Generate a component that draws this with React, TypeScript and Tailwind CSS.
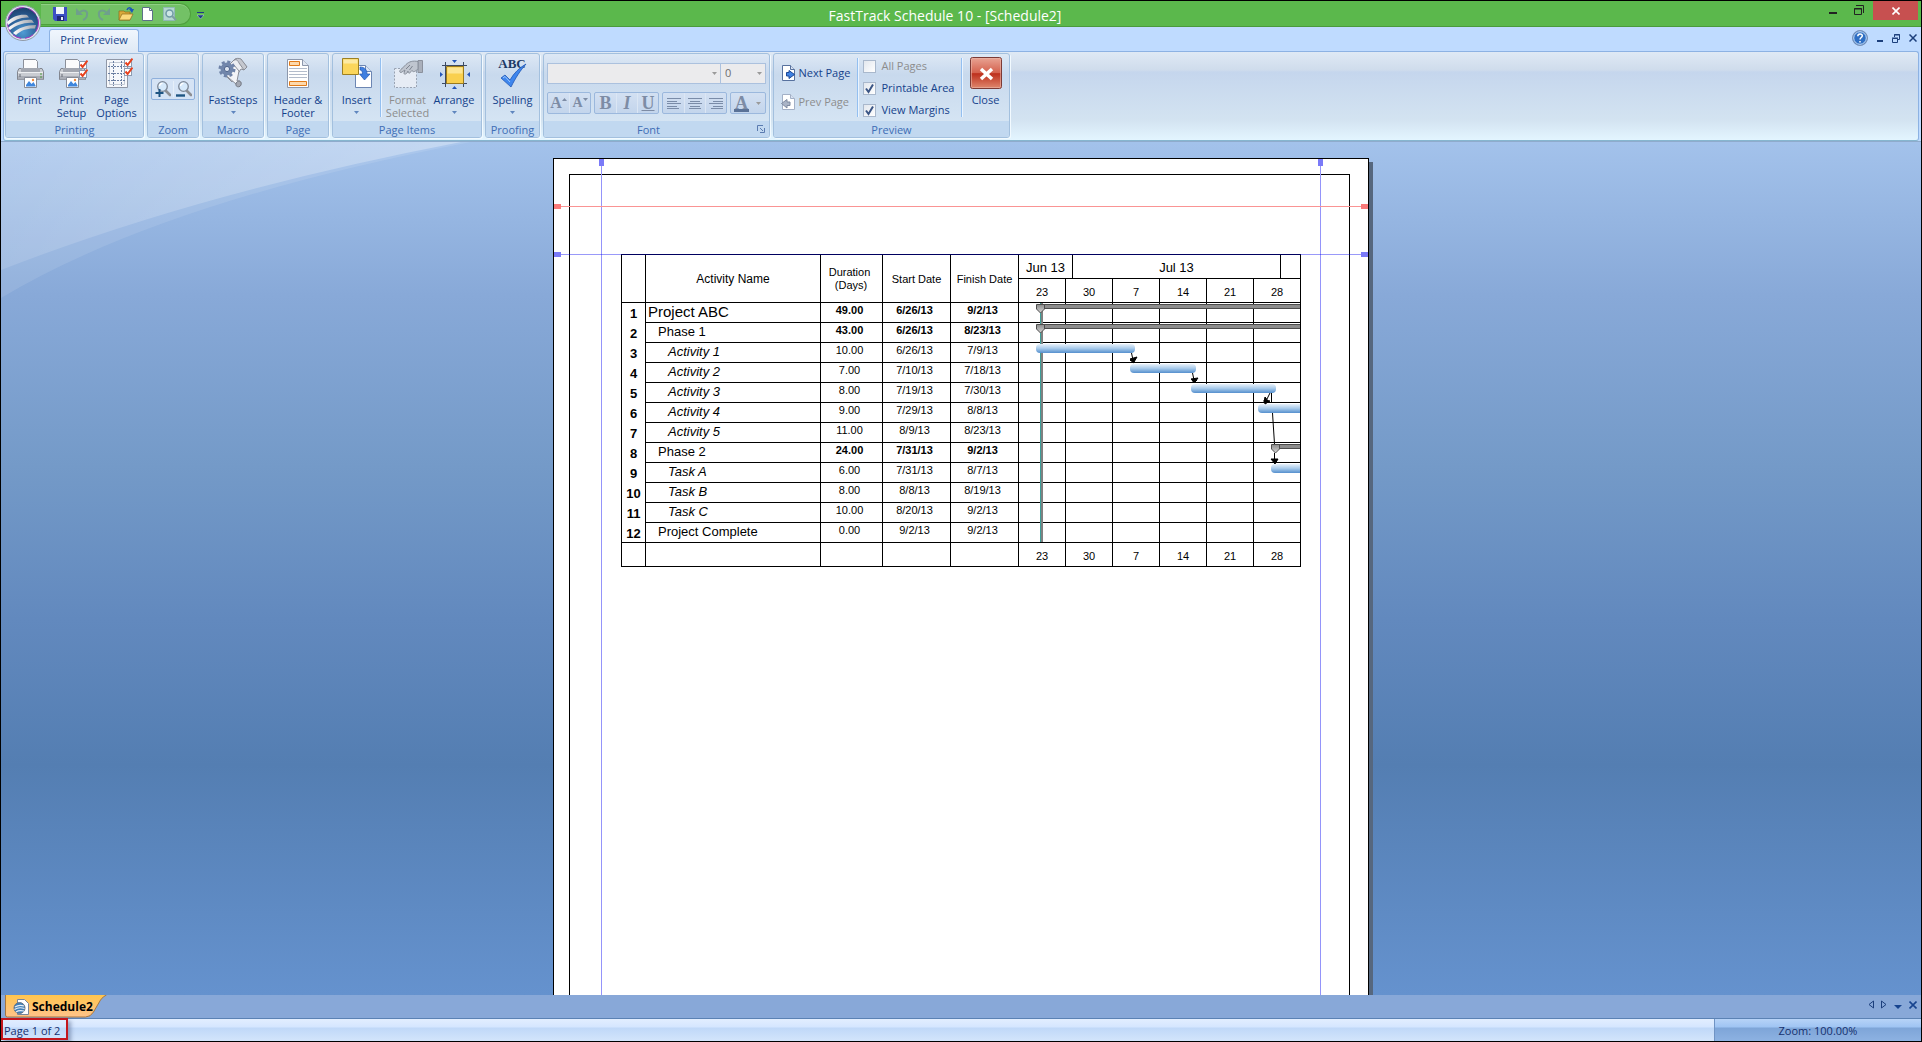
import type { ReactNode } from "react";
import { clsx } from "clsx";

const rows = [
  { name: "Project ABC", days: "49.00", start: "6/26/13", finish: "9/2/13", level: 0 },
  { name: "Phase 1", days: "43.00", start: "6/26/13", finish: "8/23/13", level: 1, bold: true },
  { name: "Activity 1", days: "10.00", start: "6/26/13", finish: "7/9/13", level: 2 },
  { name: "Activity 2", days: "7.00", start: "7/10/13", finish: "7/18/13", level: 2 },
  { name: "Activity 3", days: "8.00", start: "7/19/13", finish: "7/30/13", level: 2 },
  { name: "Activity 4", days: "9.00", start: "7/29/13", finish: "8/8/13", level: 2 },
  { name: "Activity 5", days: "11.00", start: "8/9/13", finish: "8/23/13", level: 2 },
  { name: "Phase 2", days: "24.00", start: "7/31/13", finish: "9/2/13", level: 1, bold: true },
  { name: "Task A", days: "6.00", start: "7/31/13", finish: "8/7/13", level: 2 },
  { name: "Task B", days: "8.00", start: "8/8/13", finish: "8/19/13", level: 2 },
  { name: "Task C", days: "10.00", start: "8/20/13", finish: "9/2/13", level: 2 },
  { name: "Project Complete", days: "0.00", start: "9/2/13", finish: "9/2/13", level: 1 },
];

const weeks = ["23", "30", "7", "14", "21", "28"];

/* ---------- icons ---------- */

function RedCheck({ x, y }: { x: number; y: number }) {
  return (
    <g transform={`translate(${x} ${y})`}>
      <rect x=".5" y=".5" width="7" height="7" fill="#fff" stroke="#8d9bb0" />
      <path d="M1.5 3.5 3.6 6 8.5-.5" fill="none" stroke="#e8401c" strokeWidth="2" />
    </g>
  );
}

function Printer() {
  return (
    <g>
      <path d="M9.500 2.500h12l2 2v9h-14z" fill="#fbfbfc" stroke="#8b8f99" />
      <path d="M5 11.500h23l1.500 3v8h-26v-8z" fill="#c9ccd2" stroke="#82868f" />
      <path d="M7 11h19v4H7z" fill="#a3a7b0" />
      <path d="M4 15.500h25" stroke="#eceef1" />
      <path d="M4 19h25v3.500H4z" fill="#a9adb6" />
      <path d="M26 17h2M26 20h2" stroke="#4c9a3c" />
      <path d="M6 17v3" stroke="#676b74" />
      <path d="M10.500 20.500h12v10h-12z" fill="#fff" stroke="#868b96" />
      <path d="M12 28l3-4 2.500 3 2-2 2 3.500v1H12z" fill="#3f86dc" />
      <circle cx="19" cy="23" r="1.200" fill="#f08a3c" />
    </g>
  );
}

function PrintIcon() {
  return (
    <svg className="size-8" viewBox="0 0 32 32">
      <Printer />
    </svg>
  );
}

function PrintSetupIcon() {
  return (
    <svg className="size-8" viewBox="0 0 32 32">
      <Printer />
      <RedCheck x={23} y={4} />
      <RedCheck x={23} y={13} />
    </svg>
  );
}

function PageOptionsIcon() {
  return (
    <svg className="size-8" viewBox="0 0 32 32">
      <path d="M5.500 2.500h21v28h-21z" fill="#f6f8fb" stroke="#8f97a6" />
      <path d="M8.500 5.500h15v22h-15z" fill="none" stroke="#c2c9d4" />
      <path d="M12.500 4v25M20.500 4v25M7 9.500h18M7 23.500h18M7 16.500h18" stroke="#6a7ea1" strokeDasharray="2 1" />
      <RedCheck x={23} y={2} />
      <RedCheck x={23} y={11} />
    </svg>
  );
}

function MagnifierIcon({ plus }: { plus?: boolean }) {
  return (
    <svg className="size-4" viewBox="0 0 16 16">
      <path d="M10.500 9.500 15 14" stroke="#8d8f94" strokeWidth="2.600" strokeLinecap="round" />
      <circle cx="7.500" cy="5.500" r="4.800" fill="#d6e9fb" stroke="#7e8897" strokeWidth="1.300" />
      <path d="M4.500 5a3 3 0 0 1 3-2.600" fill="none" stroke="#fff" strokeWidth="1.300" />
      {plus ? (
        <path d="M4.500 8v8M.5 12h8" stroke="#1f5583" strokeWidth="2" />
      ) : (
        <path d="M0 14.500h9" stroke="#1f5583" strokeWidth="2.400" />
      )}
    </svg>
  );
}

function FastStepsIcon() {
  return (
    <svg className="size-8" viewBox="0 0 32 32">
      <path d="M17 3c2-2 5-2 7 0l6 7-3 3-3-1-9 13-10-10z" fill="#eceef2" stroke="#8a8e98" />
      <path d="M17 3c3-1 4 1 5 3l5 7 3-3-6-8c-2-1-5-1-7 1z" fill="#c5c8cf" stroke="#8a8e98" />
      <path d="M5 15l14 12c2 2 5 2 5-1 0-2-2-3-4-2l2-10-5-6z" fill="#f3f4f7" stroke="#8a8e98" />
      <path d="M19 27c-1 3 4 4 5 1 1-4-3-5-5-2z" fill="#a5a9b3" stroke="#757a85" />
      <circle cx="10" cy="12" r="7" fill="none" stroke="#6f83a8" strokeWidth="3" strokeDasharray="3 2.500" />
      <circle cx="10" cy="12" r="6.500" fill="#7186ab" />
      <circle cx="10" cy="12" r="2.600" fill="#dbe3f0" stroke="#50658c" />
    </svg>
  );
}

function HeaderFooterIcon() {
  return (
    <svg className="size-8" viewBox="0 0 32 32">
      <path d="M5.500 2.500h15l6 6v22h-21z" fill="#fff" stroke="#8c97ab" />
      <path d="M20.500 2.500v6h6" fill="#dfe6f1" stroke="#8c97ab" />
      <path d="M7.500 4.500h10v4h-10z" fill="#fdd9ad" stroke="#e07b1a" />
      <path d="M7 11.500h18M7 14.500h18M7 17.500h18M7 20.500h18" stroke="#b3bccb" />
      <path d="M7.500 24.500h17v4h-17z" fill="#fdd9ad" stroke="#e07b1a" />
    </svg>
  );
}

function InsertIcon() {
  return (
    <svg className="size-8" viewBox="0 0 32 32">
      <path d="M14.500 8.500h10l6 6v16h-16z" fill="#fff" stroke="#6c86b3" />
      <path d="M24.500 8.500v6h6" fill="#dbe5f4" stroke="#6c86b3" />
      <path d="M1.500 1.500h16v16h-16z" fill="#fbd65c" stroke="#9d8023" />
      <path d="M2.500 2.500h14v4h-14z" fill="#fdeaa2" />
      <path d="M19 10c5 0 7 3 7 7h3l-5.500 6-5-6h3c0-3-1-4-2.500-4z" fill="#3f7fe0" stroke="#1f56b0" strokeWidth=".7" />
    </svg>
  );
}

function FormatIcon() {
  return (
    <svg className="size-8" viewBox="0 0 32 32">
      <path d="M2.500 11.500h22v19h-22z" fill="#e6ecf5" stroke="#99a3b3" strokeDasharray="2 1.500" />
      <path d="M26 3.500h4.500v12H26z" fill="#aab0bb" stroke="#8b919d" />
      <path d="M26 4.500c-5-1-9 0-12 3l-6 6c-1 2 1 2.500 2 1.500l3-2-1 3c0 2 2 1 3 0l1-2c0 3 2 2.500 3 .5l1-1c1 2 3 1 4 0l2-1z" fill="#bfc5cf" stroke="#878e9a" />
      <path d="M14 12l4-4M17.500 13l3-4" stroke="#7d8490" />
    </svg>
  );
}

function ArrangeIcon() {
  return (
    <svg className="size-8" viewBox="0 0 32 32">
      <path d="M7.500 5v25M25.500 5v25M4 8.500h25M4 26.500h25" stroke="#3c4a63" />
      <path d="M8.500 9.500h17v17h-17z" fill="#f9d04f" stroke="#9a7a1e" />
      <path d="M9.500 10.500h15v6h-15z" fill="#fde694" />
      <path d="M14 3h5l-2.500 3zM14 32h5l-2.500-3zM2 15v5l3-2.500zM32 15v5l-3-2.500z" fill="#2456b8" />
    </svg>
  );
}

function SpellingIcon() {
  return (
    <svg className="size-8 overflow-visible" viewBox="0 0 32 32">
      <text x="15" y="11" textAnchor="middle" className="fill-[#1d3a66] font-['Liberation_Serif',serif] text-[13px] font-bold">
        ABC
      </text>
      <path d="M4 21l4-3 5 5C17 16 22 11 29 7c-6 7-10 13-15 23z" fill="#3e86ee" stroke="#1f57b5" strokeWidth=".8" />
      <path d="M6 21l2-1.500 5 5.500" fill="none" stroke="#9cc6fb" />
    </svg>
  );
}

function PageArrowIcon({ back }: { back?: boolean }) {
  return (
    <svg className="size-4 shrink-0" viewBox="0 0 16 16">
      <path d="M1.500.5h8l4 4v11h-12z" fill="#fff" stroke={back ? "#a3b0c6" : "#57719e"} />
      <path d="M9.500.5v4h4" fill="#d8e2f1" stroke={back ? "#a3b0c6" : "#57719e"} />
      {back ? (
        <path d="M9 8H6V5.500L.5 9.500 6 14v-2.500h3z" fill="#aab4c6" stroke="#7f8aa0" />
      ) : (
        <path d="M5.500 7.500H8V5.500l5.500 4-5.500 4v-2.500H5.500z" fill="#3f82e4" stroke="#1c4694" />
      )}
    </svg>
  );
}

function AlignIcon({ kind }: { kind: "left" | "center" | "right" }) {
  const d = {
    left: "M1 3.500h14M1 6.500h10M1 8.500h14M1 11.500h10M1 13.500h12",
    center: "M1 3.500h14M3 6.500h10M1 8.500h14M3 11.500h10M2 13.500h12",
    right: "M1 3.500h14M5 6.500h10M1 8.500h14M5 11.500h10M3 13.500h12",
  }[kind];
  return (
    <svg className="size-4" viewBox="0 0 16 16">
      <path d={d} stroke="#7a8ca8" />
    </svg>
  );
}

function AppOrb() {
  return (
    <svg className="absolute left-[3px] top-[3px] z-20 size-[38px]" viewBox="0 0 38 38">
      <defs>
        <radialGradient id="orb" cx=".5" cy=".8" r=".8">
          <stop offset="0" stopColor="#4f9bd4" />
          <stop offset=".6" stopColor="#2a5f96" />
          <stop offset="1" stopColor="#1d3f6b" />
        </radialGradient>
        <linearGradient id="orbStripe" x1="0" x2="1">
          <stop offset="0" stopColor="#fff" />
          <stop offset="1" stopColor="#9fa4ad" />
        </linearGradient>
      </defs>
      <circle cx="19" cy="19" r="17.500" fill="#dfe5ee" stroke="#8f99a8" />
      <circle cx="19" cy="19" r="15.500" fill="url(#orb)" stroke="#b032c0" strokeDasharray="9 4" />
      <path d="M3 18C9 12 16 10 23 11l2 2.500C17 13 10 16 4 21z" fill="url(#orbStripe)" />
      <path d="M4 24C11 18 20 15 28 16l2 3C21 18 12 21 6 26z" fill="url(#orbStripe)" />
      <path d="M9 29C14 24 22 21 32 21l-1 3.500C24 24 17 26 12 31z" fill="url(#orbStripe)" />
    </svg>
  );
}

/* ---------- ribbon ---------- */

function Group({ label, className, corner, children }: { label: string; className: string; corner?: boolean; children: ReactNode }) {
  return (
    <section
      aria-label={label}
      className={clsx(
        "flex h-[85px] shrink-0 flex-col rounded-[3px] border border-[#a3c0de] bg-linear-to-b from-[#dde8f5] from-0% via-[#c8d9ed] via-25% to-[#d9e8f5] shadow-[1px_1px_0_#f2faff]",
        className,
      )}
    >
      <div className="flex flex-1 justify-center">{children}</div>
      <div className={clsx("relative h-4 rounded-b-[2px] bg-[#c1d8f0] text-center leading-[18px] text-[#3e6db5]", corner && "pr-4")}>
        {label}
        {corner && (
          <button aria-label="Font dialog" className="absolute right-1 top-1">
            <svg className="block size-2" viewBox="0 0 8 8">
              <path d="M.5 6V.5H6" fill="none" stroke="#5a7bb0" />
              <path d="M3 7.500h4.500V3M3 3l3 3" fill="none" stroke="#5a7bb0" />
            </svg>
          </button>
        )}
      </div>
    </section>
  );
}

function BigButton({ icon, lines, menu, disabled, className }: { icon: ReactNode; lines: string[]; menu?: boolean; disabled?: boolean; className: string }) {
  return (
    <button disabled={disabled} className={clsx("flex flex-col items-center pt-[3px] leading-[13px] disabled:text-[#8d8d8d]", className)}>
      {icon}
      <span className="mt-1 whitespace-nowrap">
        {lines.map((l) => (
          <span key={l} className="block">
            {l}
          </span>
        ))}
      </span>
      {menu && (
        <svg className="mt-[5px] h-[3px] w-[5px]" viewBox="0 0 5 3">
          <path d="M0 0h5L2.500 3z" fill="#5f86be" />
        </svg>
      )}
    </button>
  );
}

function Divider() {
  return <div className="my-1 w-[2px] shrink-0 border-l border-[#93bff0] bg-[#eaf4ff]" />;
}

function ToolSet({ children }: { children: ReactNode }) {
  return <div className="flex h-[22px] items-center rounded-[2px] border border-[#9bb8dd] bg-linear-to-b from-[#d3e0f2] to-[#c3d5ec]">{children}</div>;
}

function Tool({ label, children }: { label: string; children: ReactNode }) {
  return (
    <button disabled aria-label={label} className="flex h-5 w-[21px] items-center justify-center border-l border-[#dbe6f4] font-['Liberation_Serif',serif] text-lg leading-5 text-[#7d8ca5] first:border-l-0">
      {children}
    </button>
  );
}

function Check({ label, checked, disabled }: { label: string; checked?: boolean; disabled?: boolean }) {
  return (
    <label className={clsx("flex h-[22px] items-center gap-1.5 whitespace-nowrap", disabled && "text-[#8d8d8d]")}>
      <span className="relative size-[13px]">
        <input type="checkbox" defaultChecked={checked} disabled={disabled} className="peer block size-[13px] appearance-none border border-[#a9b8cc] bg-linear-to-br from-[#e2e7ee] to-white" />
        <svg className="pointer-events-none absolute inset-0 hidden size-[13px] peer-checked:block" viewBox="0 0 13 13">
          <path d="M3 6.500 5.500 10 10 2.500" fill="none" stroke="#3a5585" strokeWidth="2" />
        </svg>
      </span>
      {label}
    </label>
  );
}

function Ribbon() {
  return (
    <div className="mx-[2px] flex h-[90px] shrink-0 gap-[3px] rounded-[3px] border border-[#8db2e3] border-b-[#86b6cf] bg-[linear-gradient(#dfe9f5,#cfdcec_18px,#c5d6ed_20px,#d3e3f1_68px,#e3f5ff)] px-px pt-px text-[#15428b]">
      <Group label="Printing" className="w-[139px]">
        <BigButton icon={<PrintIcon />} lines={["Print"]} className="w-[42px]" />
        <BigButton icon={<PrintSetupIcon />} lines={["Print", "Setup"]} className="w-[42px]" />
        <BigButton icon={<PageOptionsIcon />} lines={["Page", "Options"]} className="w-[48px]" />
      </Group>
      <Group label="Zoom" className="w-[52px]">
        <div className="mt-6 flex h-[22px] items-center rounded-[2px] border border-[#8fb0dc] bg-[#d5e3f5]">
          <button aria-label="Zoom in" className="flex w-[21px] justify-center">
            <MagnifierIcon plus />
          </button>
          <button aria-label="Zoom out" className="flex w-[21px] justify-center border-l border-[#e6eff9]">
            <MagnifierIcon />
          </button>
        </div>
      </Group>
      <Group label="Macro" className="w-[62px]">
        <BigButton icon={<FastStepsIcon />} lines={["FastSteps"]} menu className="w-[58px]" />
      </Group>
      <Group label="Page" className="w-[62px]">
        <BigButton icon={<HeaderFooterIcon />} lines={["Header &", "Footer"]} className="w-[58px]" />
      </Group>
      <Group label="Page Items" className="w-[150px]">
        <BigButton icon={<InsertIcon />} lines={["Insert"]} menu className="w-[46px]" />
        <Divider />
        <BigButton icon={<FormatIcon />} lines={["Format", "Selected"]} disabled className="w-[52px]" />
        <BigButton icon={<ArrangeIcon />} lines={["Arrange"]} menu className="mr-1.5 w-[41px]" />
      </Group>
      <Group label="Proofing" className="w-[55px]">
        <BigButton icon={<SpellingIcon />} lines={["Spelling"]} menu className="w-[50px]" />
      </Group>
      <Group label="Font" className="w-[227px]" corner>
        <div className="flex w-[219px] flex-col gap-2 pt-[9px]">
          <div className="flex">
            <div className="relative w-[174px]">
              <select disabled aria-label="Font name" className="block h-[21px] w-full appearance-none border border-[#abc1de] bg-[#ebebed]" />
              <svg className="absolute right-1 top-[9px] h-[3px] w-[5px]" viewBox="0 0 5 3">
                <path d="M0 0h5L2.500 3z" fill="#9a9a9a" />
              </svg>
            </div>
            <div className="relative flex-1">
              <select disabled aria-label="Font size" className="block h-[21px] w-full appearance-none border border-l-0 border-[#abc1de] bg-[#ebebed] pl-1 text-[#6d6d6d] opacity-100">
                <option>0</option>
              </select>
              <svg className="absolute right-1 top-[9px] h-[3px] w-[5px]" viewBox="0 0 5 3">
                <path d="M0 0h5L2.500 3z" fill="#9a9a9a" />
              </svg>
            </div>
          </div>
          <div className="flex justify-between">
            <ToolSet>
              <Tool label="Grow font">
                <b className="text-base">A</b>
                <svg className="mb-2 h-[3px] w-[5px]" viewBox="0 0 5 3">
                  <path d="M0 3h5L2.500 0z" fill="#7d8ca5" />
                </svg>
              </Tool>
              <Tool label="Shrink font">
                <b className="text-sm">A</b>
                <svg className="mb-2 h-[3px] w-[5px]" viewBox="0 0 5 3">
                  <path d="M0 0h5L2.500 3z" fill="#7d8ca5" />
                </svg>
              </Tool>
            </ToolSet>
            <ToolSet>
              <Tool label="Bold">
                <b>B</b>
              </Tool>
              <Tool label="Italic">
                <i className="font-bold">I</i>
              </Tool>
              <Tool label="Underline">
                <b className="underline">U</b>
              </Tool>
            </ToolSet>
            <ToolSet>
              <Tool label="Align left">
                <AlignIcon kind="left" />
              </Tool>
              <Tool label="Center">
                <AlignIcon kind="center" />
              </Tool>
              <Tool label="Align right">
                <AlignIcon kind="right" />
              </Tool>
            </ToolSet>
            <ToolSet>
              <Tool label="Font color">
                <b className="h-[17px] border-b-3 border-[#5a7297] px-px leading-4">A</b>
              </Tool>
              <svg className="mx-1 h-[3px] w-[5px]" viewBox="0 0 5 3">
                <path d="M0 0h5L2.500 3z" fill="#9a9a9a" />
              </svg>
            </ToolSet>
          </div>
        </div>
      </Group>
      <Group label="Preview" className="w-[237px]">
        <div className="flex w-[82px] flex-col gap-[13px] pt-[11px]">
          <button className="flex h-4 items-center gap-0.5 whitespace-nowrap pl-[6px]">
            <PageArrowIcon />
            Next Page
          </button>
          <button disabled className="flex h-4 items-center gap-0.5 whitespace-nowrap pl-[6px] text-[#8d8d8d]">
            <PageArrowIcon back />
            Prev Page
          </button>
        </div>
        <Divider />
        <div className="w-[102px] pl-1 pt-px">
          <Check label="All Pages" disabled />
          <Check label="Printable Area" checked />
          <Check label="View Margins" checked />
        </div>
        <Divider />
        <BigButton
          className="w-[46px]"
          lines={["Close"]}
          icon={
            <svg className="size-8" viewBox="0 0 32 32">
              <defs>
                <linearGradient id="closeRed" x2="0" y2="1">
                  <stop offset="0" stopColor="#e9a595" />
                  <stop offset=".5" stopColor="#d4604c" />
                  <stop offset=".52" stopColor="#bd2f1c" />
                  <stop offset="1" stopColor="#e08a70" />
                </linearGradient>
              </defs>
              <rect x=".5" y=".5" width="31" height="31" rx="2" fill="url(#closeRed)" stroke="#7c3a35" />
              <rect x="1.500" y="1.500" width="29" height="29" rx="1" fill="none" stroke="#eab5a8" strokeOpacity=".6" />
              <path d="M11 12l11 10M22 12l-11 10" stroke="#fff" strokeWidth="3.500" />
            </svg>
          }
        />
      </Group>
    </div>
  );
}

/* ---------- title bar ---------- */

function QuickAccess() {
  return (
    <div className="ml-[40px] mt-[2px] flex h-[22px] w-[150px] items-center gap-[6px] rounded-r-full border border-l-0 border-[#4f9f3e] bg-[#73c166] pl-[11px] shadow-[inset_0_1px_0_#8fd084]">
      <button aria-label="Save">
        <svg className="size-4" viewBox="0 0 16 16">
          <path d="M1 1h14v14H3l-2-2z" fill="#3c4fc4" />
          <path d="M4 1h8v7H4z" fill="#f1f4fb" />
          <path d="M5 10h7v5H5z" fill="#20297a" />
          <path d="M9 11h2v3H9z" fill="#e8ecf8" />
        </svg>
      </button>
      <button aria-label="Undo" disabled>
        <svg className="size-4" viewBox="0 0 16 16">
          <path d="M6 6c4-3 8-1 7 3 0 2-2 4-4 5" fill="none" stroke="#6f9f8c" strokeWidth="2" />
          <path d="M2 2v7h7z" fill="#6f9f8c" />
        </svg>
      </button>
      <button aria-label="Redo" disabled>
        <svg className="size-4" viewBox="0 0 16 16">
          <path d="M10 6C6 3 2 5 3 9c0 2 2 4 4 5" fill="none" stroke="#6f9f8c" strokeWidth="2" />
          <path d="M14 2v7H7z" fill="#6f9f8c" />
        </svg>
      </button>
      <button aria-label="Open">
        <svg className="size-4" viewBox="0 0 16 16">
          <path d="M1 5h5l1 1h5v8H1z" fill="#d9a93a" stroke="#8f6a1a" strokeWidth=".7" />
          <path d="M1 14 4 8h11l-3 6z" fill="#fbd97c" stroke="#8f6a1a" strokeWidth=".7" />
          <path d="M9 4c1-3 4-3 5 0" fill="none" stroke="#1d56b8" strokeWidth="1.500" />
          <path d="M11 3h5l-2 4z" fill="#1d56b8" />
        </svg>
      </button>
      <button aria-label="New">
        <svg className="size-4" viewBox="0 0 16 16">
          <path d="M2.500 1.500h7l3 3v10h-10z" fill="#fff" stroke="#5c7188" />
          <path d="M9.500 1.500v3h3" fill="none" stroke="#5c7188" />
        </svg>
      </button>
      <button aria-label="Print preview" disabled>
        <svg className="size-4" viewBox="0 0 16 16">
          <path d="M1.500 1.500h11v13h-11z" fill="#b4d6cf" stroke="#8fb8b4" />
          <circle cx="7.500" cy="7.500" r="3.500" fill="#cde6e4" stroke="#6f9aa6" strokeWidth="1.500" />
          <path d="M10 10l4 4" stroke="#7d9ea0" strokeWidth="2" />
        </svg>
      </button>
    </div>
  );
}

function TitleBar() {
  return (
    <header className="grid h-[26px] shrink-0 grid-cols-[1fr_auto_1fr] border-b border-[#4a9a3c] bg-[#5bb84c]">
      <div className="flex">
        <QuickAccess />
        <button aria-label="Customize toolbar" className="ml-[6px]">
          <svg className="h-2 w-[7px]" viewBox="0 0 7 8">
            <path d="M0 .5h7" stroke="#1c3a86" />
            <path d="M0 3h7L3.500 7z" fill="#1c3a86" stroke="#e8f4ff" strokeWidth=".4" />
          </svg>
        </button>
      </div>
      <h1 className="pr-8 text-sm leading-[29px] text-white">FastTrack Schedule 10 - [Schedule2]</h1>
      <div className="flex items-start justify-end pr-[3px]">
        <button aria-label="Minimize" className="px-2 pt-[11px]">
          <span className="block h-[2px] w-2 bg-[#222]" />
        </button>
        <button aria-label="Restore" className="px-[9px] pt-1">
          <svg className="block size-[10px]" viewBox="0 0 10 10">
            <path d="M.5 3.500h7v6h-7zM0 4h8M2 .5h7.500V8" fill="none" stroke="#222" />
          </svg>
        </button>
        <button aria-label="Close" className="flex h-[19px] w-[45px] items-center justify-center bg-[#c75050]">
          <svg className="size-2" viewBox="0 0 8 8">
            <path d="M.5 .5l7 7M7.500 .5l-7 7" stroke="#fff" strokeWidth="1.600" />
          </svg>
        </button>
      </div>
    </header>
  );
}

function TabRow() {
  return (
    <div className="flex h-6 shrink-0 items-end justify-between bg-[#bfdbff] text-[#15428b]">
      <button className="relative z-10 -mb-px ml-[48px] h-[23px] w-[90px] rounded-t-[3px] border border-b-0 border-[#8db2e3] bg-linear-to-b from-[#f0f6fd] to-[#dfe9f5] pb-0.5">
        Print Preview
      </button>
      <div className="flex h-6 items-center gap-[9px] pb-0.5 pr-1 text-[#1c3f7c]">
        <button aria-label="Help">
          <svg className="size-4" viewBox="0 0 16 16">
            <circle cx="8" cy="8" r="7.500" fill="#2f6fc4" stroke="#7d93b5" />
            <circle cx="8" cy="8" r="6.300" fill="none" stroke="#cfe2f8" />
            <path d="M5.800 6.200c0-3 4.500-3 4.500-.4C10.300 7.500 8 7.500 8 9.500M8 11v1.500" fill="none" stroke="#fff" strokeWidth="1.500" />
          </svg>
        </button>
        <button aria-label="Minimize document">
          <span className="mt-1.5 block h-[2px] w-1.5 bg-[#1c3f7c]" />
        </button>
        <button aria-label="Restore document">
          <svg className="h-[9px] w-2" viewBox="0 0 8 9">
            <path d="M.5 4.500h5v4h-5zM0 4h6M2.500 3V.5h5v5H6M2 1h6" fill="none" stroke="#1c3f7c" />
          </svg>
        </button>
        <button aria-label="Close document">
          <svg className="size-2" viewBox="0 0 8 8">
            <path d="M.5 .5l7 7M7.500 .5l-7 7" stroke="#1c3f7c" strokeWidth="1.500" />
          </svg>
        </button>
      </div>
    </div>
  );
}

/* ---------- page ---------- */

function Summary({ x, y }: { x: number; y: number }) {
  return (
    <g transform={`translate(${x} ${y})`}>
      <rect x="8" y="0" width={274 - x} height="5" fill="#8c8c8c" />
      <path d={`M8 .5h${274 - x}M8 4.500h${274 - x}`} stroke="#4d4d4d" />
      <path d="M.5.5h8V5L4.500 9 .5 5z" fill="url(#cap)" stroke="#4d4d4d" />
    </g>
  );
}

function Gantt() {
  return (
    <svg className="absolute right-0 top-[49px] h-[240px] w-[283px]" viewBox="0 0 283 240">
      <defs>
        <linearGradient id="bar" x2="0" y2="1">
          <stop offset="0" stopColor="#e9f2fb" />
          <stop offset=".5" stopColor="#a6c9ea" />
          <stop offset="1" stopColor="#558fcd" />
        </linearGradient>
        <linearGradient id="cap" x2="0" y2="1">
          <stop offset="0" stopColor="#8a8a8a" />
          <stop offset="1" stopColor="#d5d5d5" />
        </linearGradient>
        <clipPath id="chartEdge">
          <rect width="282" height="240" />
        </clipPath>
      </defs>
      <path d="M22.500 0v239" stroke="#3d9d98" />
      <path d="M24 0v239" stroke="#808080" strokeWidth="2" />
      <Summary x={18} y={1} />
      <Summary x={18} y={21} />
      <g clipPath="url(#chartEdge)" fill="url(#bar)">
        <rect x="18" y="41" width="99" height="9" rx="4" />
        <rect x="112" y="61" width="66" height="9" rx="4" />
        <rect x="173" y="81" width="85" height="9" rx="4" />
        <rect x="240" y="101" width="60" height="9" rx="4" />
        <rect x="253" y="161" width="60" height="9" rx="4" />
      </g>
      <path d="M113.500 50 115 57M174.500 70 176 77M252 90l-3 6M253.500 90v10M254.500 110l2 31M256.500 150v7" stroke="#000" fill="none" />
      <Summary x={253} y={141} />
      <path
        d="M112 56l7-2-3 5zM112 57h4v3zM173 76l7-1-3 4zM174 77h5l-3 3zM247 94l4 5h-5zM246 97l6 1-5 3zM253 156h7l-3 5z"
        stroke="#000"
      />
    </svg>
  );
}

function ScheduleTable() {
  const cell = "border-l border-t border-black p-0 font-normal";
  const value = "border-l border-t border-black pr-1";
  return (
    <div className="relative w-[680px]">
      <table className="w-full table-fixed border-separate border-spacing-0 border-b border-r border-black text-center text-[11px] leading-[14px]">
        <colgroup>
          <col className="w-[24px]" />
          <col className="w-[175px]" />
          <col className="w-[62px]" />
          <col className="w-[68px]" />
          <col className="w-[68px]" />
          {weeks.map((w) => (
            <col key={w} className="w-[47px]" />
          ))}
        </colgroup>
        <thead>
          <tr className="h-6">
            <th rowSpan={2} className={cell} />
            <th rowSpan={2} className={clsx(cell, "text-xs")}>
              Activity Name
            </th>
            <th rowSpan={2} className="border-l border-t border-black pr-1 font-normal leading-[13px]">
              Duration
              <br />
              &nbsp;(Days)
            </th>
            <th rowSpan={2} className={cell}>
              Start Date
            </th>
            <th rowSpan={2} className={cell}>
              Finish Date
            </th>
            <th colSpan={6} className={cell}>
              <div className="flex h-[23px] text-[13px] leading-[25px]">
                <span className="w-[53px]">Jun 13</span>
                <span className="w-[208px] border-l border-black">Jul 13</span>
                <span className="flex-1 border-l border-black" />
              </div>
            </th>
          </tr>
          <tr className="h-6">
            {weeks.map((w) => (
              <th key={w} className={clsx(cell, "pt-0.5")}>
                {w}
              </th>
            ))}
          </tr>
        </thead>
        <tbody className="align-top">
          {rows.map((r, i) => {
            const heavy = r.level === 0 || r.bold;
            return (
              <tr key={r.name} className="h-5">
                <th className={clsx("border-l border-black text-[13px] leading-[17px]", i === 0 ? "border-t pt-[2px]" : "pt-[3px]")}>{i + 1}</th>
                <td
                  className={clsx(
                    "border-l border-t border-black text-left leading-[17px]",
                    r.level === 0 && "pl-0.5 text-[15px]",
                    r.level === 1 && "pl-3 text-[13px]",
                    r.level === 2 && "pl-[22px] text-[13px] italic",
                  )}
                >
                  {r.name}
                </td>
                <td className={clsx(value, heavy && "font-bold")}>{r.days}</td>
                <td className={clsx(value, heavy && "font-bold")}>{r.start}</td>
                <td className={clsx(value, heavy && "font-bold")}>{r.finish}</td>
                {weeks.map((w) => (
                  <td key={w} className="border-l border-t border-black" />
                ))}
              </tr>
            );
          })}
        </tbody>
        <tfoot>
          <tr className="h-6">
            <td className={cell} />
            <td className={cell} />
            <td className={cell} />
            <td className={cell} />
            <td className={cell} />
            {weeks.map((w) => (
              <td key={w} className={clsx(cell, "pt-0.5")}>
                {w}
              </td>
            ))}
          </tr>
        </tfoot>
      </table>
      <Gantt />
    </div>
  );
}

function Paper() {
  return (
    <div className="relative mx-auto mt-4 h-[1056px] w-[816px] border border-black bg-white font-['Liberation_Sans',Arial,sans-serif] text-black shadow-[4px_4px_0_#56677e]">
      <div className="ml-[15px] mr-[18px] mt-[15px] h-[1020px] border border-black px-[51px] pt-[79px]">
        <ScheduleTable />
      </div>
      {/* margin guides */}
      <div className="absolute inset-y-0 left-[47px] w-px bg-[#9494fa]" />
      <div className="absolute inset-y-0 right-[47px] w-px bg-[#9494fa]" />
      <div className="absolute inset-x-0 top-[47px] h-px bg-[#fa9494]" />
      <div className="absolute inset-x-0 top-[95px] h-px bg-[#0000f0]/40" />
      <div className="absolute left-[45px] top-0 h-[7px] w-[5px] bg-[#7a7af8]" />
      <div className="absolute right-[45px] top-0 h-[7px] w-[5px] bg-[#7a7af8]" />
      <div className="absolute left-0 top-[45px] h-[5px] w-[7px] bg-[#fa7a7a]" />
      <div className="absolute right-0 top-[45px] h-[5px] w-[7px] bg-[#fa7a7a]" />
      <div className="absolute left-0 top-[93px] h-[5px] w-[7px] bg-[#7a7af8]" />
      <div className="absolute right-0 top-[93px] h-[5px] w-[7px] bg-[#7a7af8]" />
    </div>
  );
}

function Workspace() {
  return (
    <main className="relative min-h-0 flex-1 overflow-hidden border-t border-[#8fabcc] bg-[linear-gradient(#a3c2eb,#88a9d8_18%,#749ac8_38%,#6289be_56%,#547eb2_73%,#6592ce)]">
      <svg className="absolute left-0 top-0 h-[160px] w-[480px]" viewBox="0 0 480 160">
        <defs>
          <linearGradient id="swoosh" x2="1">
            <stop offset="0" stopColor="#fff" stopOpacity=".12" />
            <stop offset="1" stopColor="#fff" stopOpacity=".3" />
          </linearGradient>
        </defs>
        <path d="M0 0v156Q160 60 470 0z" fill="#fff" fillOpacity=".1" />
        <path d="M0 0v128Q200 50 460 0z" fill="url(#swoosh)" />
      </svg>
      <Paper />
    </main>
  );
}

function DocumentTabs() {
  return (
    <nav className="flex h-[24px] shrink-0 items-center justify-between border-b border-[#5b82b4] bg-[#88a8d8]">
      <button className="relative ml-1 flex h-[23px] w-[102px] items-center gap-[3px] self-start pl-2 text-xs font-bold text-black">
        <svg className="absolute left-0 top-0 h-[23px] w-[102px]" viewBox="0 0 102 23">
          <defs>
            <linearGradient id="tab" x2="0" y2="1">
              <stop offset="0" stopColor="#ffc54e" />
              <stop offset="1" stopColor="#ffc38a" />
            </linearGradient>
          </defs>
          <path d="M.5 0v20q0 2 2 2h78q5 0 8-5l7-12q3-4 6-5z" fill="url(#tab)" />
          <path d="M.5 0v20q0 2 2 2h78q5 0 8-5l7-12q3-4 6-5" fill="none" stroke="#a8763c" />
        </svg>
        <svg className="relative size-4" viewBox="0 0 16 16">
          <path d="M4.500.5h7l4 4v11h-11z" fill="#fff" stroke="#7a8698" />
          <circle cx="6.500" cy="9" r="5.500" fill="#3f7fb8" stroke="#6a7585" />
          <path d="M2 8c3-2 6-2 9-1M1.500 10.500c3-2 7-2 10-1M3 13c2-1.500 5-1.500 8-1" fill="none" stroke="#e8eef5" strokeWidth="1.200" />
        </svg>
        <span className="relative">Schedule2</span>
      </button>
      <div className="flex items-center gap-[7px] pb-1 pr-1">
        <button aria-label="Previous tab">
          <svg className="h-[9px] w-[6px]" viewBox="0 0 6 9">
            <path d="M5.500 1v7L1 4.500z" fill="none" stroke="#1c3f7c" />
          </svg>
        </button>
        <button aria-label="Next tab">
          <svg className="h-[9px] w-[6px]" viewBox="0 0 6 9">
            <path d="M.5 1v7L5 4.500z" fill="none" stroke="#1c3f7c" />
          </svg>
        </button>
        <button aria-label="Tab list">
          <svg className="mt-1 h-1 w-2" viewBox="0 0 8 4">
            <path d="M0 0h8L4 4z" fill="#17448f" />
          </svg>
        </button>
        <button aria-label="Close tab">
          <svg className="size-2" viewBox="0 0 8 8">
            <path d="M.5 .5l7 7M7.500 .5l-7 7" stroke="#17448f" strokeWidth="1.600" />
          </svg>
        </button>
      </div>
    </nav>
  );
}

function StatusBar() {
  return (
    <footer className="relative flex h-[22px] shrink-0 leading-6 text-[#15306e]">
      <div className="flex-1 border-r border-[#6f93c4] bg-[linear-gradient(#e2eeff,#d5e6ff_8px,#c0d8f8_9px,#d3e5fb)] pl-[3px]">Page 1 of 2</div>
      <div className="w-[206px] bg-[linear-gradient(#b7d3f7,#9fc4f3_8px,#7ea5d8_9px,#8db2e2)] text-center">Zoom: 100.00%</div>
      <div className="absolute -top-px left-0 h-[22px] w-[67px] border-2 border-[#c4161c] shadow-[3px_3px_4px_rgba(60,80,120,.45)]" />
    </footer>
  );
}

export default function App() {
  return (
    <div className="relative flex h-screen flex-col overflow-hidden border border-black bg-[#bfdbff] font-['Open_Sans','Noto_Sans',sans-serif] text-[11px]">
      <AppOrb />
      <TitleBar />
      <TabRow />
      <Ribbon />
      <Workspace />
      <DocumentTabs />
      <StatusBar />
    </div>
  );
}
